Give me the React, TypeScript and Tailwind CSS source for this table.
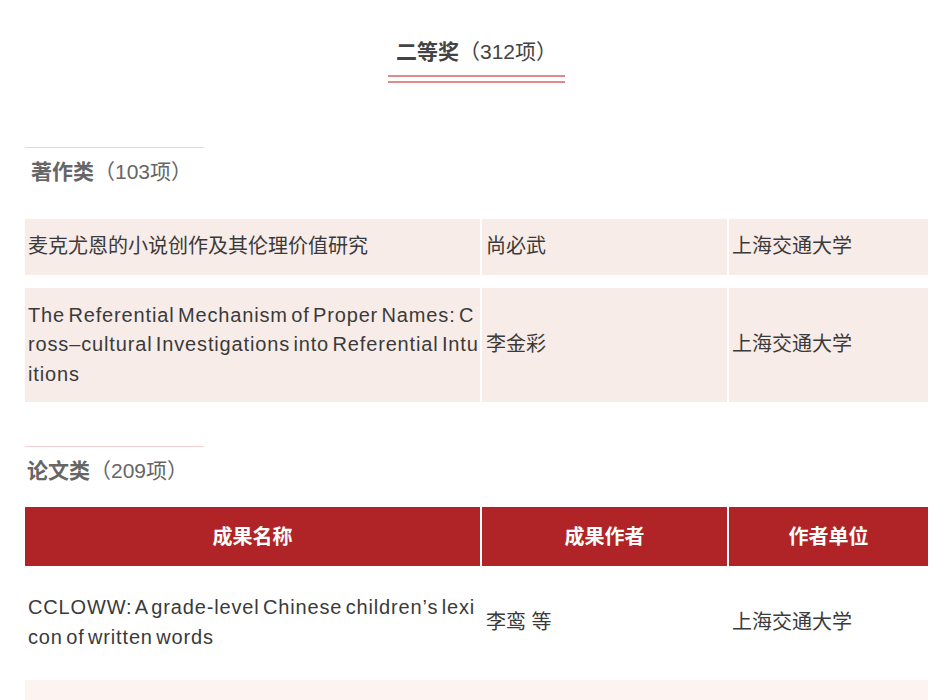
import React from 'react';

const FONT = { fontFamily: '"Liberation Sans", "Noto Sans CJK SC", sans-serif' };

type Row = { title: string; author: string; unit: string; latin?: boolean };

const booksRows: Row[] = [
  { title: '麦克尤恩的小说创作及其伦理价值研究', author: '尚必武', unit: '上海交通大学' },
  {
    title: 'The Referential Mechanism of Proper Names: Cross–cultural Investigations into Referential Intuitions',
    author: '李金彩',
    unit: '上海交通大学',
    latin: true,
  },
];

// 通用表格行：三列，中间留 2px 白缝
function TableRow({ row, bg, tall }: { row: Row; bg: string; tall?: boolean }) {
  return (
    <div className="grid grid-cols-[455px_245px_199px] gap-x-[2px]">
      <div
        className={`${bg} pl-[3px] flex items-center break-all text-[20px] leading-[29.5px] text-[#3a3a3a] ${
          tall ? 'pt-[27px] pb-[28px]' : 'py-[13px]'
        } ${row.latin ? 'tracking-[0.85px] [word-spacing:-3px]' : ''}`}
      >
        <span>{row.title}</span>
      </div>
      <div className={`${bg} pl-[4px] flex items-center text-[20px] leading-[29.5px] text-[#3a3a3a]`}>
        {row.author}
      </div>
      <div className={`${bg} pl-[3px] flex items-center text-[20px] leading-[29.5px] text-[#3a3a3a]`}>
        {row.unit}
      </div>
    </div>
  );
}

function SectionHeading({ name, count, indent }: { name: string; count: string; indent: string }) {
  return (
    <div>
      <div className="w-[179px] h-px bg-[#f5cfd2]" />
      <div className={`mt-[9px] ${indent} text-[21px] leading-[30px] text-[#666666]`}>
        <span className="font-bold">{name}</span>
        <span>（{count}项）</span>
      </div>
    </div>
  );
}

export default function App() {
  return (
    <div className="min-h-[700px] bg-white overflow-hidden" style={FONT}>
      <div className="ml-[25px] w-[903px]">
        {/* 标题 */}
        <div className="pt-[37px] flex flex-col items-center">
          <div className="text-[21px] leading-[30px] text-[#444444]">
            <span className="font-bold">二等奖</span>
            <span>（312项）</span>
          </div>
          <div className="mt-[8px] w-[177px] h-[2px] bg-[#e08a8b]" />
          <div className="mt-[4px] w-[177px] h-[2px] bg-[#e08a8b]" />
        </div>

        {/* 著作类 */}
        <div className="mt-[64px]">
          <SectionHeading name="著作类" count="103" indent="pl-[6px]" />
        </div>
        <div className="mt-[32px] flex flex-col gap-y-[13px]">
          {booksRows.map((r, i) => (
            <TableRow key={i} row={r} bg="bg-[#f8ece8]" />
          ))}
        </div>

        {/* 论文类 */}
        <div className="mt-[44px]">
          <SectionHeading name="论文类" count="209" indent="pl-[2px]" />
        </div>
        <div className="mt-[21px]">
          <div className="grid grid-cols-[455px_245px_199px] gap-x-[2px] h-[59px]">
            <div className="bg-[#b02427] flex items-center justify-center text-white font-bold text-[20px]">成果名称</div>
            <div className="bg-[#b02427] flex items-center justify-center text-white font-bold text-[20px]">成果作者</div>
            <div className="bg-[#b02427] flex items-center justify-center text-white font-bold text-[20px]">作者单位</div>
          </div>
          <TableRow
            row={{
              title: 'CCLOWW: A grade-level Chinese children’s lexicon of written words',
              author: '李鸾 等',
              unit: '上海交通大学',
              latin: true,
            }}
            bg="bg-white"
            tall
          />
          <div className="h-[40px] bg-[#fdf3f0]" />
        </div>
      </div>
    </div>
  );
}
